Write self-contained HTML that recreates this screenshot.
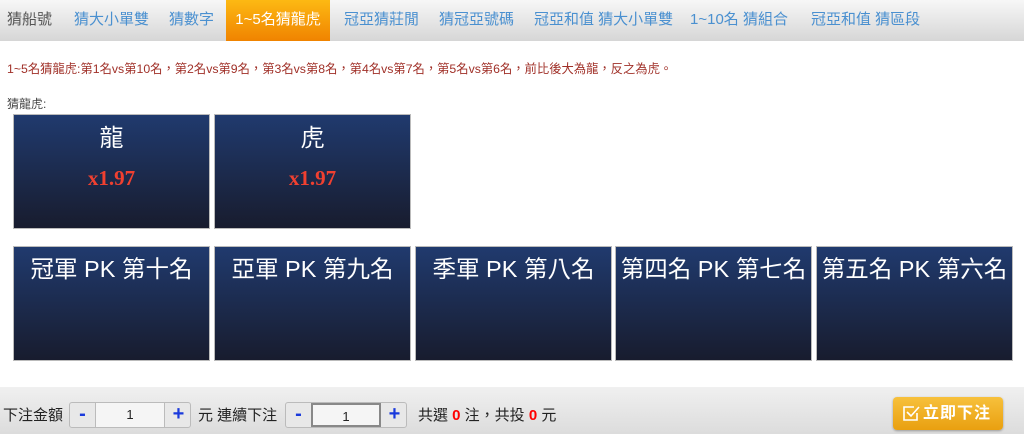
<!DOCTYPE html>
<html><head><meta charset="utf-8"><style>
*{margin:0;padding:0;box-sizing:border-box}
body{width:1024px;height:434px;overflow:hidden;background:#fff;font-family:"Liberation Sans","Noto Sans CJK TC",sans-serif;position:relative}
.nav{position:absolute;left:0;top:0;width:1024px;height:41px;background:linear-gradient(#f7f7f7,#d6d6d6)}
.nav span{position:absolute;top:0;height:41px;line-height:40px;font-size:15px;color:#4a90d0;white-space:nowrap}
.nav .act{background:linear-gradient(#fdb913,#f08300);color:#fff;left:226px;width:104px;text-align:center}
.note{position:absolute;left:7px;top:59px;font-size:12.3px;color:#a03028;white-space:nowrap}
.lbl{position:absolute;left:7px;top:95px;font-size:12px;color:#444}
.b{position:absolute;width:197px;height:115px;background:linear-gradient(#203a6e,#181c2e);border:1px solid #bbb;color:#fff;text-align:center}
.b .t{font-size:24px;margin-top:9px;line-height:30px}
.b .o{font-family:"Liberation Serif",serif;font-weight:bold;color:#f04030;font-size:21px;margin-top:12px}
.b2 .t{font-size:23.5px;margin-top:7px;white-space:nowrap}
.bar{position:absolute;left:0;top:387px;width:1024px;height:47px;background:linear-gradient(#f0f0f0,#dcdcdc);font-size:15px;color:#222}
.bar .x{position:absolute;top:17px;white-space:nowrap}
.sp{position:absolute;top:15px;height:26px;border:1px solid #bbb;border-radius:3px;background:#e8e8e8}
.sp i{position:absolute;top:0;width:25px;height:24px;line-height:22px;text-align:center;font-style:normal;color:#1a3adc;font-weight:bold;font-size:20px}
.sp b{position:absolute;top:0;left:25px;width:70px;height:24px;background:#f5f5f5;border-left:1px solid #bbb;border-right:1px solid #bbb;text-align:center;font-weight:normal;line-height:24px;font-size:13px}
.r{color:#f00;font-weight:bold}
.go{position:absolute;left:893px;top:397px;width:110px;height:33px;border-radius:4px;background:linear-gradient(#f7c13c,#e9a010);box-shadow:0 1px 2px #999;color:#fff;font-weight:bold;font-size:16px;line-height:33px;padding-left:30px;letter-spacing:1px}
.go svg{position:absolute;left:9px;top:7px}
</style></head><body>
<div class="nav">
<span style="left:7px;color:#555">猜船號</span>
<span style="left:74px">猜大小單雙</span>
<span style="left:169px">猜數字</span>
<span class="act">1~5名猜龍虎</span>
<span style="left:344px">冠亞猜莊閒</span>
<span style="left:439px">猜冠亞號碼</span>
<span style="left:534px">冠亞和值 猜大小單雙</span>
<span style="left:690px">1~10名 猜組合</span>
<span style="left:811px">冠亞和值 猜區段</span>
</div>
<div class="note">1~5名猜龍虎:第1名vs第10名，第2名vs第9名，第3名vs第8名，第4名vs第7名，第5名vs第6名，前比後大為龍，反之為虎。</div>
<div class="lbl">猜龍虎:</div>
<div class="b" style="left:13px;top:114px"><div class="t">龍</div><div class="o">x1.97</div></div>
<div class="b" style="left:214px;top:114px"><div class="t">虎</div><div class="o">x1.97</div></div>
<div class="b b2" style="left:13px;top:246px"><div class="t">冠軍 PK 第十名</div></div>
<div class="b b2" style="left:214px;top:246px"><div class="t">亞軍 PK 第九名</div></div>
<div class="b b2" style="left:415px;top:246px"><div class="t">季軍 PK 第八名</div></div>
<div class="b b2" style="left:615px;top:246px"><div class="t">第四名 PK 第七名</div></div>
<div class="b b2" style="left:816px;top:246px"><div class="t">第五名 PK 第六名</div></div>
<div class="bar">
<span class="x" style="left:3px">下注金額</span>
<div class="sp" style="left:69px;width:122px"><i style="left:0">-</i><b>1</b><i style="left:96px">+</i></div>
<span class="x" style="left:198px">元 連續下注</span>
<div class="sp" style="left:285px;width:122px"><i style="left:0">-</i><b style="border:2px solid #888">1</b><i style="left:96px">+</i></div>
<span class="x" style="left:418px">共選 <span class="r">0</span> 注，共投 <span class="r">0</span> 元</span>
</div>
<div class="go"><svg width="18" height="18" viewBox="0 0 18 18" fill="none" stroke="#fff" stroke-width="1.6"><path d="M15 9v7H2V3h10"/><path d="M5 8l4 4 8-9"/></svg>立即下注</div>
</body></html>
